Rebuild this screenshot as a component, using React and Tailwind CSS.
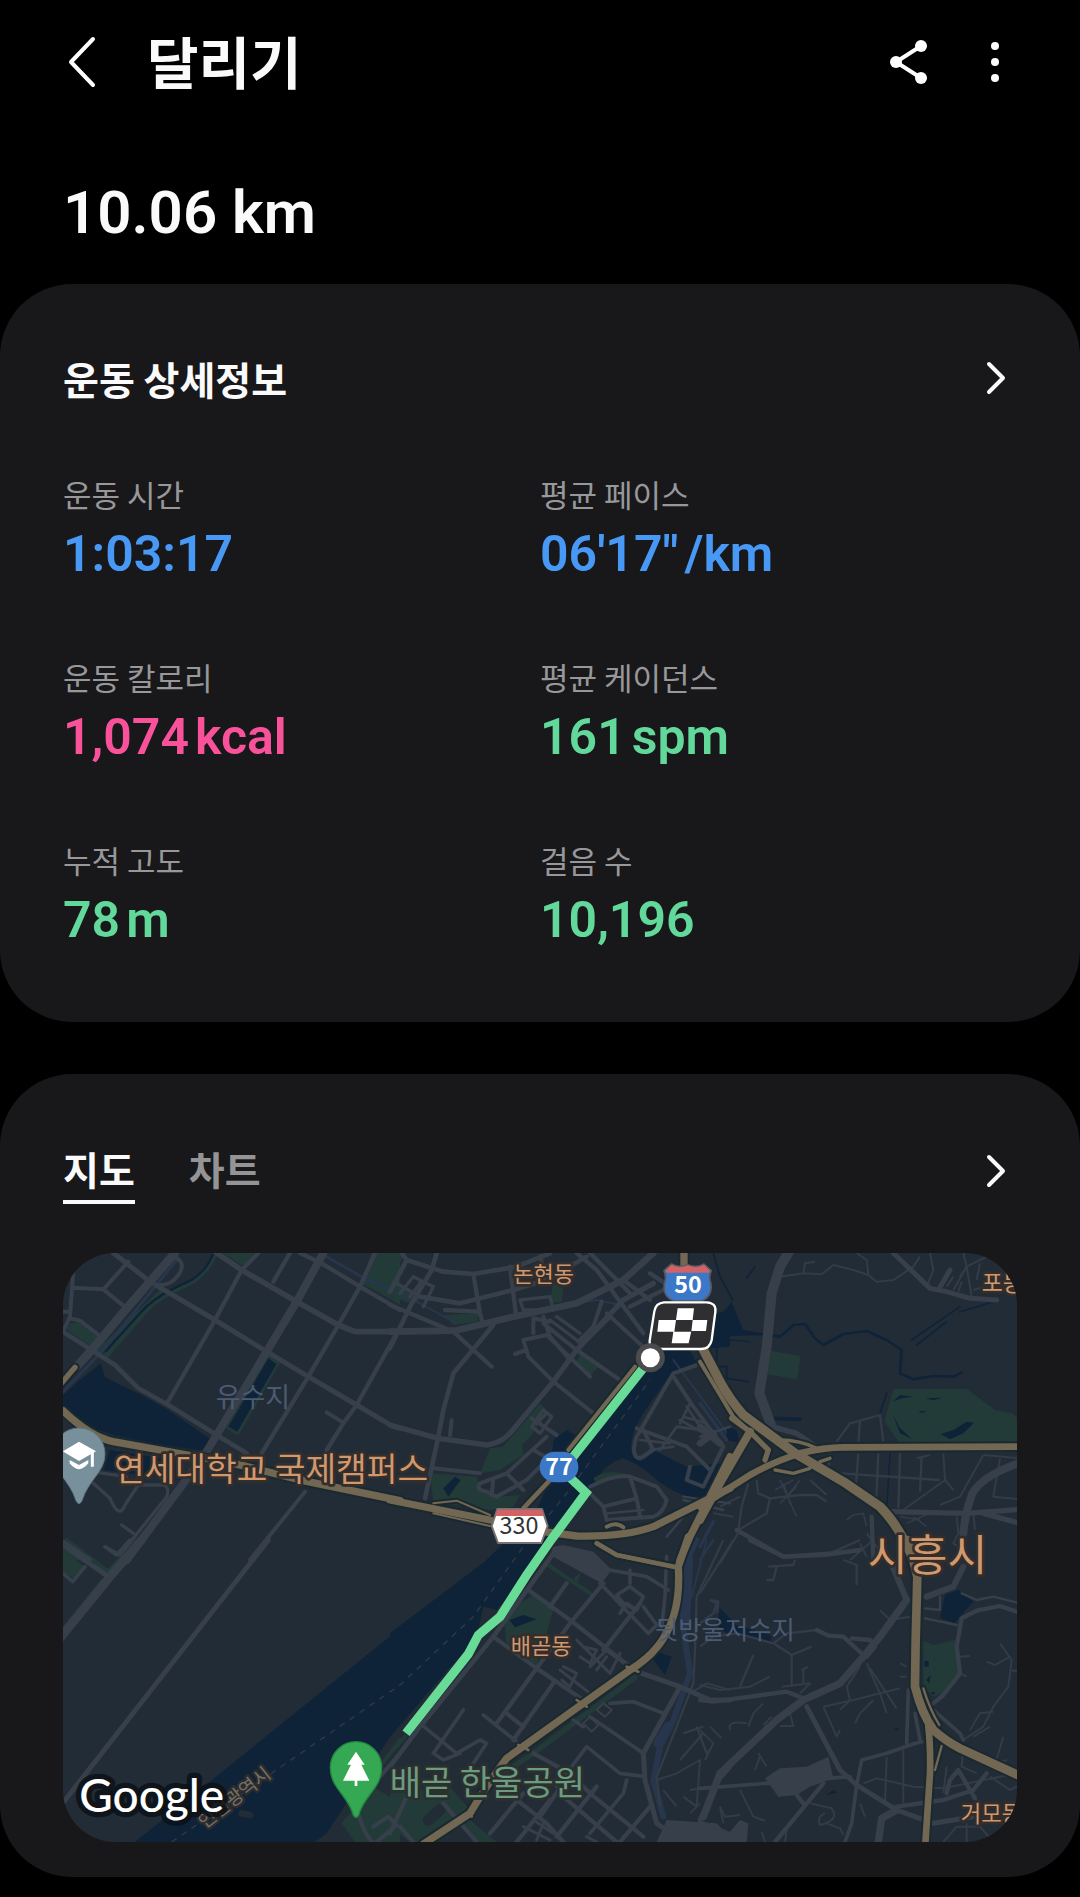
import { useState } from 'react'

const STATS = [
	{ label: '운동 시간', value: '1:03:17', color: 'text-[#4799f5]' },
	{ label: '평균 페이스', value: '06\'17"', unit: '/km', color: 'text-[#4799f5]' },
	{ label: '운동 칼로리', value: '1,074', unit: 'kcal', color: 'text-[#f9529b]' },
	{ label: '평균 케이던스', value: '161', unit: 'spm', color: 'text-[#62d99b]' },
	{ label: '누적 고도', value: '78', unit: 'm', color: 'text-[#62d99b]' },
	{ label: '걸음 수', value: '10,196', color: 'text-[#62d99b]' },
]

const LAND = '#212c37'
const WATER = '#0f2338'
const PARK = '#233b38'
const ROAD = '#373f4a'
const LANE = '#323b47'
const RAIL = '#27364d'
const HIGHWAY = '#716752'
const CASING = '#1a292f'

// the map is cut in six tiles, every tile draws in its own coordinates
const TILES = [
	{
		x: -9,
		y: -9,
		water: [
			'M9 475 V435 L60 390 L122 340 L135 380 L180 405 L235 430 L325 480 L452 568 L440 603 L300 585 L160 555 L100 535 L50 505Z',
			'M150 600 L370 635 L365 690 L130 660Z',
		],
		park: [
			'M20 240 L30 220 L60 215 L115 260 L95 290Z',
			'M490 9 H582 L565 42 L545 45Z',
			'M935 9 H1020 V165 L960 130 L905 100Z',
			'M9 870 L100 930 H9Z',
			'M622 316 L660 338 L535 557 L498 535Z',
		],
		ponds: ['M625 325 L650 342 L532 545 L505 530Z'],
		lines: [
			[PARK, 14, 'M110 310 L230 195 L310 120'],
			[PARK, 16, 'M465 9 Q445 60 400 92 L345 120 Q280 150 245 195 L140 315'],
			[WATER, 7, 'M460 9 Q442 58 398 88 L340 116 Q276 148 240 190 L138 303'],
			[RAIL, 9, 'M9 425 L130 300 L350 30'],
			[RAIL, 8, 'M780 9 L905 80 L960 105 L1020 140'],
		],
		roads: [
			[15, 'M160 9 L270 95 L465 210 L620 305 L745 380 L890 465 L1000 530 L1020 535'],
			[17, 'M465 5 L545 60 L710 155 L835 225 L885 245 L1020 245'],
			[26, 'M345 9 L200 175 L95 300 L50 350'],
			[24, 'M790 9 L710 155 L620 305 L470 555 L430 620 L200 930'],
			[13, 'M595 9 L545 60 L465 210 L320 462 M690 9 L640 95 M720 9 L785 40 L900 110 L1020 180'],
			[13, 'M945 9 L900 110 L835 225 L745 380 L605 610 M1010 250 L890 465 L850 520 L800 600'],
			[12, 'M205 35 L130 118 L35 113 M130 118 L200 175 M40 60 L30 200 L9 245 M9 185 H30 M30 205 L60 212 L120 258'],
			[12, 'M345 20 Q380 40 355 75 Q335 105 300 105'],
			[14, 'M9 245 L95 300 L165 345 L235 415 L325 465 L470 555 L560 610'],
			[12, 'M800 487 L850 518 M735 725 L570 930 M9 875 L90 930'],
			[10, 'M95 665 L200 680 M100 700 L150 745 Q178 810 195 765 L235 705 L310 705 Q330 710 320 740 L180 915 L135 890 M185 825 L220 850'],
		],
		highways: [
			[22, 'M9 482 Q90 560 160 575 L300 600 L520 640 L740 694 L1020 752'],
			[16, 'M0 405 L45 352'],
		],
	},
	{
		x: 981,
		y: -9,
		water: [
			'M800 270 L545 600 L565 560 L530 540 L490 570 L480 690 L440 780 L290 930 H440 L600 720 Q640 640 700 625 Q760 650 800 690 Q870 740 920 745 L950 750 L1000 640 L890 650 L790 600 Q750 660 725 610 Q715 560 760 490 L830 390 L920 340 L900 300 L1020 290 V180 L980 190 L960 300Z',
		],
		park: [
			'M0 9 H45 L20 60 L0 75Z',
			'M0 80 L40 110 L90 150 L60 160 L0 135Z',
			'M165 195 L265 190 L262 215 L190 225Z',
			'M490 100 L520 115 L515 155 L480 160Z',
			'M575 310 L625 350 L600 378 L555 340Z',
			'M450 460 L475 485 L420 560 L395 585 L400 615 L330 660 L270 670 L300 595 L340 590Z',
			'M120 670 L260 680 L270 710 L330 740 L390 735 L370 770 L300 780 L130 755Z',
			'M610 685 Q670 645 740 690 L700 680 L620 700Z',
		],
		ponds: ['M160 715 L195 680 L212 690 L175 740Z'],
		lines: [
			[RAIL, 6, 'M0 115 L90 160 L200 220 M560 160 L620 150 L690 165 M850 330 L1020 560'],
		],
		roads: [
			[20, 'M0 245 L195 242 L370 200 L560 160 L700 90 L790 9'],
			[14, 'M50 30 L0 125 M35 9 L50 30 L160 65 L250 72 L380 50 L480 10'],
			[14, 'M140 9 L125 60 L60 170 L0 295 M90 140 L210 160 L370 120 L470 90'],
			[13, 'M250 72 L270 190 L280 225 M360 50 L378 195 M450 20 L470 90 L590 20 M165 180 L265 185'],
			[13, 'M0 165 L60 190 L190 245 L250 300 L305 350'],
			[14, 'M310 225 L190 370 L160 480 L145 560 L105 745'],
			[16, 'M0 525 L145 565 L290 585 Q330 580 360 550 L490 395 L560 300 L700 150 L790 100'],
			[12, 'M400 270 L470 255 L600 380 M400 270 L415 320 L490 395 L610 490 M375 312 L410 300 M185 510 L180 555'],
			[12, 'M460 220 L560 300 L690 390 M430 250 V205 L480 215 M540 330 L480 260 L460 200 M565 275 L610 230 L635 155 M650 190 L770 300'],
			[13, 'M560 9 L620 60 L760 250 M600 9 L720 130 M780 70 L840 110 L720 170 M700 90 L780 150 M660 200 L560 300'],
			[12, 'M500 555 L425 505 M430 600 L500 640 M470 560 L350 670 L270 700 Q255 720 290 725 L320 740 L410 690 L460 640 M350 670 L400 720 M310 685 L305 735 M130 655 L270 670'],
			[10, 'M20 100 L90 140 M30 130 L70 80 L130 110 L100 170 M60 140 L90 100 M390 150 L480 140 L490 180 L400 180Z M480 210 L560 270 M500 200 L570 250'],
			[10, 'M460 480 L485 500 L450 550 L425 530Z M440 520 L470 490'],
			[12, 'M850 370 L920 345 M850 370 L740 560 Q720 620 750 625 L790 600 L760 540 M850 380 L910 470 L1000 590 L940 710 L890 690 L900 650 M740 535 L890 590 L960 660'],
			[8, 'M810 600 L860 530 L930 540 M870 510 L960 560 M1020 530 L930 560 M900 460 L870 520 M890 470 L930 530 M880 500 L950 520 M750 570 L840 580 M780 600 L850 590'],
			[12, 'M600 710 Q680 670 720 680 L800 710 L830 750 Q820 790 790 800 L650 810 L640 770 L600 730 M640 770 L740 745 L720 680 M740 745 L750 800'],
			[7, 'M880 750 L1000 780 M830 860 L880 800 M650 790 L760 780 M880 740 L1020 760'],
		],
		highways: [
			[22, 'M0 750 L300 810'],
			[22, 'M460 845 L560 858 Q700 862 790 830 L1020 715'],
			[14, 'M480 690 L400 775'],
			[12, 'M735 350 L535 600'],
			[22, 'M882 9 V50'],
			[22, 'M1020 620 L960 740 L900 860 L870 930'],
			[12, 'M620 880 L680 915 L850 950 M650 830 Q680 815 700 832'],
			[6, 'M130 760 L200 752 L300 795 M130 790 L300 828 M930 335 L1020 490'],
		],
	},
	{
		x: 1911,
		y: -9,
		water: [
			'M50 210 L95 155 L130 240 L200 255 L0 262 V200Z',
			'M80 570 V530 L110 540 L120 580Z',
		],
		park: [
			'M580 417 H800 L885 480 L935 490 L960 510 V580 H600 L553 515Z',
			'M215 303 L302 318 L291 388 L200 373Z',
		],
		ponds: [
			'M578 455 L600 435 L640 440 L605 445Z',
			'M675 445 L728 443 L700 451Z',
			'M655 483 L680 484 L665 489Z',
			'M722 552 L760 540 L800 515 L822 518 L790 550 L750 568Z',
			'M578 492 L600 535 L638 568 L600 550Z',
		],
		lines: [
			[WATER, 8, 'M130 245 L240 260 L280 225 L315 222 L345 265 L370 285 L430 252 L500 243 L560 270 L605 300 L600 370 L640 388 L700 378 L760 380 L785 368'],
			[WATER, 5, 'M635 270 L780 170 M650 285 L740 215 M780 185 L850 165 L890 150 M40 10 L60 80 L98 150 M560 430 L540 490 M140 85 L165 50 M50 290 V350 H80 V385 L145 395'],
			[WATER, 11, 'M215 505 L300 508'],
			[WATER, 4, 'M0 262 L150 275 M570 610 L560 780'],
			[RAIL, 10, 'M0 460 L80 570 M40 815 L0 890'],
		],
		roads: [
			[30, 'M270 0 L240 50 L215 130 L200 290 L178 430 L215 530'],
			[16, 'M215 530 L290 550 L355 595'],
			[15, 'M580 9 L690 115 L740 125 L810 145 L890 150 M715 120 L750 60'],
			[24, 'M960 638 Q840 680 815 735 Q795 790 790 850'],
			[16, 'M570 785 L800 790 L960 778 M850 790 L960 820'],
			[13, 'M110 840 L250 920 L370 915 L480 900 M515 800 L520 930'],
			[20, 'M0 580 L40 550 M0 530 L60 580'],
		],
		lanes: [
			[6, 'M240 80 L310 70 L365 73 L400 45 L460 60 L505 75 L530 95 L580 90 L640 50 L660 20 M310 70 L315 40 L345 35 M505 75 L500 30 L470 9'],
			[6, 'M690 9 L700 60 L680 110 M760 120 L800 50 L860 20 M800 50 L815 140 M830 90 L840 40 M790 9 L800 50 L780 80 M820 120 L890 100 M740 110 L760 80 M775 125 L785 95'],
			[7, 'M410 575 L450 520 L540 495 L550 575 M480 515 L475 580 M475 610 L468 700 M535 610 L528 760 M600 610 L595 775 M665 620 L660 725 M390 668 L720 690'],
			[6, 'M730 610 L735 690 L610 780 M650 625 L690 615 M850 615 L780 740 L720 765 M735 690 L760 720 M900 625 L880 740 L960 748 M850 615 L960 625'],
			[7, 'M170 690 L175 730 L210 745 L300 735 L350 735 L380 755 M330 690 L380 735 M210 745 L200 790 L115 840 L125 770 L145 700'],
			[5, 'M240 690 L290 800 M260 740 L300 690 M225 720 L280 690 M240 760 L290 710 M250 700 L270 760 M440 810 L460 795 L490 790 L500 830 M640 800 L680 830 M600 800 L660 810 M620 820 L690 790'],
			[6, 'M820 790 L825 840 M770 800 L775 850 L760 880 L790 900 M60 770 L120 740 M40 790 L100 800 M450 930 L520 870 M480 880 L500 920'],
			[7, 'M120 840 L60 940 M500 850 L560 930 M390 610 L385 660'],
		],
		highways: [
			[12, 'M0 335 L100 500 L150 545'],
			[28, 'M0 280 L60 395 Q90 450 130 495 L285 610 L430 695 L540 770 Q600 830 645 940'],
			[20, 'M0 770 L150 675 Q220 635 300 610 Q370 592 430 592 L960 590'],
			[24, 'M150 545 L60 700 L0 810'],
			[16, 'M95 505 L150 545 L205 600 L195 630'],
			[10, 'M240 570 Q300 570 350 595 M225 660 L280 670 L330 655 M360 635 L390 625'],
		],
	},
	{
		x: -9,
		y: 861,
		water: ['M1020 265 L225 906 H765 L800 880 L1020 545Z'],
		park: [
			'M9 35 L75 80 L45 115 L9 100Z',
			'M845 850 L940 740 L1020 790 V906 H885Z',
		],
		ponds: [],
		lines: [
			[PARK, 12, 'M20 0 L145 95 L230 0 M125 125 L15 260'],
			[PARK, 12, 'M1020 600 L960 680'],
			[LAND, 20, 'M545 820 L570 825'],
		],
		roads: [
			[26, 'M245 0 L150 110 L0 295'],
			[15, 'M9 15 L145 110'],
			[11, 'M9 100 L38 125 L75 80 M135 20 L170 45 L210 0'],
			[15, 'M625 0 L0 800'],
			[12, 'M895 820 Q910 880 940 910 M940 860 L985 830 L1010 855 L950 906 M1020 640 L960 710'],
		],
		highways: [],
	},
	{
		x: 981,
		y: 861,
		water: ['M0 280 L310 45 L370 0 H490 L320 210 L280 200 L260 290 L0 590Z', 'M800 335 L845 350 L825 405 L790 360Z'],
		park: [
			'M430 165 L490 210 L470 280 L440 375 L350 310 L340 220Z',
			'M0 760 L180 740 L240 810 L100 906 H60 L0 860Z',
			'M240 840 L320 906 H260 L210 860Z',
			'M550 115 L575 95 L560 130Z',
		],
		ponds: ['M358 240 L400 225 L440 238 L375 262Z'],
		lines: [
			[PARK, 12, 'M470 72 L600 160 M0 640 L45 590'],
			[PARK, 16, 'M735 412 L430 640 L340 700'],
			[LAND, 34, 'M115 840 L150 810'],
			[RAIL, 18, 'M920 0 Q860 100 885 300 L900 400 L850 540 L810 620 L790 720 L820 830'],
			[RAIL, 30, 'M895 60 L885 250 M835 560 L805 610'],
			[RAIL, 6, 'M950 0 L905 170'],
		],
		built: [
			'M490 20 L520 15 L610 35 L665 90 L635 130 L480 45Z',
			'M830 840 L980 850 L1020 890 V906 H800Z',
		],
		roads: [
			[14, 'M490 40 L310 290 L90 560 L0 680'],
			[13, 'M415 150 L540 240 L720 380 M310 290 L440 385 L580 480'],
			[13, 'M640 130 L540 250 L440 385 L320 550 M530 130 L480 200 M750 190 L640 330'],
			[11, 'M90 550 L200 640 M220 510 L130 640 L160 660 L210 640 M280 525 L380 605 M200 640 L270 600 L290 610 L250 670'],
			[13, 'M490 430 L370 600 M350 520 L400 560 M720 380 L650 330'],
			[11, 'M660 90 L770 110 L835 150 M775 280 L630 130 M775 280 L800 255 L760 200 M720 90 V130 M680 165 L720 140 L760 170 L740 210 L700 190Z M690 220 L710 190 L740 210'],
			[11, 'M830 50 L825 170 L815 260'],
			[9, 'M560 300 L660 400 L690 340 M580 320 L620 330 L600 370 L570 350 M510 390 L600 460 M520 380 L560 400 L540 440 L515 420 M600 380 L650 330 M620 390 L650 350'],
			[15, 'M740 395 L870 440 L960 480 L1020 480'],
			[15, 'M865 450 L760 640 L765 720 L800 850 L830 870'],
			[11, 'M660 490 L730 485 L820 520 M550 540 L580 560 M600 530 L760 640 M590 620 L500 740 M590 620 L690 700 L765 710 M710 720 L700 760 L600 880'],
			[6, 'M600 530 L625 555 L605 575 L580 550Z M640 490 L665 510 L645 530 L620 510Z'],
			[13, 'M430 640 L540 700 L600 760 L760 890 M330 740 L470 850 L520 906 M400 760 L300 880 M480 780 L380 906 M540 700 L450 830 M620 740 L500 890 M520 770 L680 906 M780 800 L690 906'],
			[9, 'M400 860 L480 900 M430 840 L490 880 M440 900 L460 850 M590 890 L620 906'],
			[12, 'M0 880 L50 770 M30 860 L70 906 M160 790 L260 906'],
			[14, 'M1020 680 L985 720 L930 840'],
		],
		lanes: [
			[7, 'M1000 0 L920 170 L915 330 L910 430 L860 560 L800 710 L810 800 M960 180 L980 190 L970 220 L930 250 M880 580 L940 560 M940 580 L870 660 M920 560 L950 640 L960 630'],
			[6, 'M800 720 L860 700 L930 660 L920 800 L880 770 M900 750 L960 740 M900 820 L930 790 M820 750 L860 800 M900 460 L950 430 L1020 450 M990 800 L1000 850'],
		],
		highways: [
			[14, 'M620 10 L680 45 L860 82'],
			[22, 'M895 -10 L865 80 Q870 170 850 230 Q820 330 720 390 L580 490 L350 655 Q300 720 240 820 L100 912'],
			[8, 'M560 480 L590 500 M385 615 L415 630 M235 820 L245 830 M710 380 L745 395'],
		],
	},
	{
		x: 1911,
		y: 861,
		water: [
			'M735 165 L775 150 L820 185 L775 235 L765 250 L720 235Z',
			'M50 255 L60 205 L110 255 L215 288 L210 305 L80 280Z',
		],
		park: ['M670 303 L700 315 L765 300 L775 400 L735 455 L700 470 L670 440Z'],
		ponds: ['M673 363 H686 V380 H673Z', 'M678 420 L692 405 L688 430Z', 'M378 765 L400 750 L412 758Z', 'M582 565 H600 L590 572Z', 'M695 455 L708 458 L695 465Z'],
		lines: [[RAIL, 8, 'M40 0 L0 60']],
		built: ['M195 715 L240 685 L320 680 L385 650 L400 715 L330 740 L290 765 L235 770Z', 'M0 840 L90 875 L120 840 L145 850 L140 906 H0Z'],
		roads: [
			[13, 'M0 480 L40 485 L260 455 L310 475'],
			[22, 'M620 180 L540 290 L490 350 L420 430 L310 480 L230 540 L60 700 L10 830'],
			[15, 'M320 500 L420 690 L470 735 L590 810 L700 850 L820 830'],
			[13, 'M150 0 L250 50 L400 40 M350 270 L385 287 L430 290 L490 345 M500 350 L525 320 L510 300 L455 295'],
			[18, 'M570 60 L620 180 M680 170 L760 140 L790 80'],
			[11, 'M0 745 L200 730 L450 710 M470 735 L485 660 L560 640 L640 612 L665 605 M470 735 L455 850 L435 906'],
			[13, 'M225 906 L370 730 M290 765 L310 790 M590 800 L730 780 L820 750 L860 700 M740 760 L750 720 L775 690 L825 775'],
			[22, 'M590 810 L545 835 L535 906'],
			[13, 'M960 218 L900 198 L830 212 L785 235 L770 320 L780 400 L730 465 L700 490'],
			[11, 'M625 450 L620 610 M700 510 L780 580 L790 600 M645 520 L660 600'],
			[7, 'M785 160 L830 180 L880 170 L960 190 M720 170 V210 L675 205 M675 235 L770 255'],
		],
		lanes: [
			[7, 'M100 0 L0 160 M390 40 L480 0 M430 60 L470 75 V135 M205 80 L280 75 L285 60 M230 80 L220 120 H200 M30 180 L55 185 L50 220 M0 320 L40 290 L110 280 L220 310 L275 345 L335 320 M220 310 L260 280 L350 270 M275 345 V440 M120 440 L160 345'],
			[6, 'M0 435 L60 450 L150 440 L210 410 M245 440 L330 430 L300 460 M310 390 V430 M305 390 L325 380 M190 490 L160 520 L145 560 M90 570 Q80 540 140 550 M190 555 L215 530 M270 520 L280 558 H240 M370 500 L410 590 L420 570 M370 500 L460 480 L540 460 L600 445'],
			[6, 'M420 510 L450 480 L440 440 L480 380 M465 550 L480 520 L520 480 M500 370 L540 460 L560 520 M510 385 L590 505 M540 210 L570 240 L630 230 M600 370 L620 380 M600 410 H620'],
			[6, 'M900 310 L935 360 L925 440 L880 500 L850 560 L790 600 M860 365 L885 375 L930 350 M935 392 H960 M810 570 L840 520 L880 515 M820 590 L870 560 M780 350 L810 348 M780 400 L800 410'],
			[6, 'M60 800 L75 830 L120 825 M120 750 L160 830 L195 842 M180 650 L165 690 M175 640 L200 680 M30 560 L65 595 M15 660 L40 610 L0 570 M185 875 L195 906 M260 870 L255 906 M330 790 L395 805 Q420 840 360 855 Q350 830 375 820 M380 850 L420 865 L430 885'],
			[6, 'M490 730 L530 715 L640 740 L730 745 L951 700 M560 650 L555 790 M610 630 L610 790 M880 690 L910 590 M860 680 L920 660 M870 710 L930 750 L960 735 M740 680 L730 760 M790 620 L785 680 L830 700 M730 906 L770 860 L840 860 L880 906 M800 850 L800 906 M480 790 L495 830'],
		],
		highways: [
			[26, 'M625 0 L652 110 L647 300 L645 440 Q665 520 700 570 Q740 605 780 625 L960 708'],
			[20, 'M685 560 Q692 620 690 700 L676 912'],
			[7, 'M670 445 Q690 510 718 555 M725 618 L705 690'],
		],
	},
]

// place names on the map, [x, y, font size, fill, text, halo]
const PLACES = [
	[458, 461, 81, '#4c5b72', '유수지', null],
	[2756, 113, 69, '#d0986d', '포동', '#332d2b'],
	[1351, 88, 66, '#d0986d', '논현동', '#332d2b'],
	[153, 684, 100, '#d0986d', '연세대학교 국제캠퍼스', '#332d2b'],
	[2414, 953, 130, '#d0986d', '시흥시', '#332d2b'],
	[1776, 1158, 76, '#4c5b72', '뒷방울저수지', null],
	[1343, 1204, 66, '#d0986d', '배곧동', '#332d2b'],
	[980, 1627, 102, '#6c9b80', '배곧 한울공원', '#2b302e'],
	[2693, 1707, 67, '#d0986d', '거모동', '#332d2b'],
]

const tileAt = ({ x, y }) => `translate(${x} ${y})`

const RouteMap = () => (
	<svg
		viewBox="0 0 2862 1767"
		className="block w-full h-auto rounded-[52px] bg-[#212c37] font-['Noto_Sans_CJK_KR',sans-serif]"
		role="img"
		aria-label="달리기 경로"
		fill="none"
		strokeLinejoin="round"
	>
		{/* water, parks and the small streams */}
		{TILES.map((tile, i) => (
			<g key={i} transform={tileAt(tile)}>
				{tile.water.map((d) => <path key={d} d={d} fill={WATER} />)}
				{tile.park.map((d) => <path key={d} d={d} fill={PARK} />)}
				{tile.ponds?.map((d) => <path key={d} d={d} fill={WATER} />)}
				{tile.lines.map(([color, width, d]) => (
					<path key={d} d={d} stroke={color} strokeWidth={width} strokeLinecap="round" />
				))}
				{tile.lanes?.map(([width, d]) => <path key={d} d={d} stroke={LANE} strokeWidth={width} />)}
				{tile.built?.map((d) => <path key={d} d={d} fill={ROAD} />)}
			</g>
		))}

		{TILES.map((tile, i) => (
			<g key={i} transform={tileAt(tile)} stroke={ROAD} strokeLinecap="round">
				{tile.roads.map(([width, d]) => <path key={d} d={d} strokeWidth={width} />)}
			</g>
		))}

		{/* city border on the river */}
		<path
			d="M326 1767 L1011 1296 L1231 1091 L1381 881 L1511 721 L1761 381"
			stroke="#2f3a46"
			strokeWidth="4"
			strokeDasharray="18 18"
		/>

		{TILES.map((tile, i) => (
			<g key={i} transform={tileAt(tile)} stroke={CASING} strokeLinecap="round">
				{tile.highways.map(([width, d]) => <path key={d} d={d} strokeWidth={width + 12} />)}
			</g>
		))}
		{TILES.map((tile, i) => (
			<g key={i} transform={tileAt(tile)} stroke={HIGHWAY} strokeLinecap="round">
				{tile.highways.map(([width, d]) => <path key={d} d={d} strokeWidth={width} />)}
			</g>
		))}

		{PLACES.map(([x, y, size, fill, name, halo]) => (
			<text
				key={name}
				x={x}
				y={y}
				fontSize={size}
				fill={fill}
				stroke={halo || 'none'}
				strokeWidth="16"
				paintOrder="stroke"
			>
				{name}
			</text>
		))}

		<g transform="translate(981 -9)">
			<path
				d="M775 335 L530 645 Q518 662 535 678 L588 728 L483 870 L410 975 L330 1100 L265 1155 L235 1212 L48 1450"
				stroke="#68dc96"
				strokeWidth="27"
				strokeLinejoin="miter"
			/>

			{/* road shields */}
			<rect x="449" y="605" width="116" height="92" rx="46" fill="#3b78c8" />
			<text x="507" y="675" fontSize="70" fontWeight="700" fill="#fff" textAnchor="middle">77</text>

			<path d="M322 777 H456 L473 828 L454 879 H324 L305 828Z" fill="#fff" stroke="#77706f" strokeWidth="6" />
			<path d="M323 779 H455 L461 798 H317Z" fill="#d16266" />
			<text x="387" y="851" fontSize="70" fill="#333" textAnchor="middle">330</text>

			<path
				d="M845 42 Q868 55 893 44 Q920 55 942 42 L964 62 Q955 80 962 98 Q970 138 935 153 H850 Q815 138 824 98 Q830 80 822 62Z"
				fill="#3b78c8"
				stroke="#59595f"
				strokeWidth="5"
			/>
			<path d="M845 44 Q868 57 893 46 Q920 57 942 44 L960 62 L956 68 H830 L826 62Z" fill="#d16266" />
			<text x="894" y="129" fontSize="70" fontWeight="700" fill="#fff" textAnchor="middle">50</text>

			{/* finish flag and the end point */}
			<path
				d="M822 157 H950 Q980 159 976 186 L965 270 Q960 296 934 297 H800 Q776 296 779 272 L793 184 Q797 159 822 157Z"
				fill="#2f2f31"
				stroke="#fff"
				strokeWidth="7"
			/>
			<path
				d="M863 175 H912 L908 210 H952 L948 243 H904 L896 280 H845 L850 245 H802 L806 210 H858Z M858 210 L853 245 H904 L908 210Z"
				fill="#fff"
				fillRule="evenodd"
			/>
			<circle cx="781" cy="323" r="36" fill="#fff" stroke="#4b4b4d" strokeWidth="15" />
		</g>

		{/* university pin */}
		<g transform="translate(-9 -9)">
			<path
				d="M57 534 A78 78 0 0 1 135 612 C135 665 85 690 66 752 Q57 770 48 752 C29 690 -21 665 -21 612 A78 78 0 0 1 57 534Z"
				fill="#78909c"
				stroke="#607883"
				strokeWidth="3"
			/>
			<path d="M57 575 L108 604 L57 633 L8 604Z M29 630 L57 645 L85 630 V640 Q57 675 29 640Z" fill="#fff" />
			<path d="M97 606 V650" stroke="#fff" strokeWidth="9" />
		</g>

		{/* park pin and the attribution */}
		<g transform="translate(-9 861)">
			<path
				d="M888 605 A77 77 0 0 1 965 682 C965 745 912 765 896 825 Q888 840 880 825 C864 765 811 745 811 682 A77 77 0 0 1 888 605Z"
				fill="#34a853"
				stroke="#248a40"
				strokeWidth="4"
			/>
			<path d="M888 635 L914 674 H904 L928 722 H892 V738 H884 V722 H849 L873 674 H862Z" fill="#fff" />
			<text
				x="434"
				y="868"
				fontSize="56"
				fill="#757068"
				stroke="#2c2c2d"
				strokeWidth="14"
				paintOrder="stroke"
				transform="rotate(-38 434 868)"
			>
				인천광역시
			</text>
			<text
				x="58"
				y="815"
				fontSize="138"
				fill="#fff"
				stroke="#0c1116"
				strokeOpacity="0.85"
				strokeWidth="32"
				paintOrder="stroke"
				className="font-['Lato',sans-serif]"
				fontWeight="500"
			>
				Google
			</text>
		</g>
	</svg>
)

const ChevronRight = () => (
	<svg viewBox="0 0 24 40" className="block w-6 h-10" fill="none" aria-hidden="true">
		<path d="M4 6 L18 20 L4 34" stroke="#fafafa" strokeWidth="4" strokeLinecap="round" strokeLinejoin="round" />
	</svg>
)

const Stat = ({ label, value, unit, color }) => (
	<div>
		<dt className="text-[31px] leading-[44px] text-[#98989b]">{label}</dt>
		<dd className={`mt-2 flex gap-[6px] text-[50px] leading-[60px] font-semibold font-['Roboto',sans-serif] ${color}`}>
			<span>{value}</span>
			{unit && <span>{unit}</span>}
		</dd>
	</div>
)

const Tab = ({ active, children, ...props }) => (
	<button
		type="button"
		role="tab"
		aria-selected={active}
		className={`pb-[2px] border-b-4 text-[39px] leading-[60px] font-bold ${active ? 'border-[#fafafa] text-[#fafafa]' : 'border-transparent text-[#949496]'}`}
		{...props}
	>
		{children}
	</button>
)

const App = () => {
	const [tab, setTab] = useState('map')

	return (
		<div className="min-h-screen bg-black pb-5 text-[#fafafa] font-['Noto_Sans_CJK_KR',sans-serif]">
			<header className="flex items-center h-[124px] px-[63px]">
				<button type="button" aria-label="뒤로">
					<svg viewBox="0 0 38 54" className="block w-[38px] h-[54px]" fill="none" aria-hidden="true">
						<path d="M30 4 L8 27 L30 50" stroke="#fff" strokeWidth="4" strokeLinecap="round" strokeLinejoin="round" />
					</svg>
				</button>
				<h1 className="ml-[46px] pb-1 text-[56px] leading-[80px] font-bold">달리기</h1>

				<div className="flex items-center gap-[42px] ml-auto">
					<button type="button" aria-label="공유">
						<svg viewBox="0 0 44 48" className="block w-11 h-12" fill="#fff" aria-hidden="true">
							<path d="M34 8 L9 24 L34 40" fill="none" stroke="#fff" strokeWidth="4" />
							<circle cx="34" cy="8" r="6" />
							<circle cx="9" cy="24" r="6" />
							<circle cx="34" cy="40" r="6" />
						</svg>
					</button>
					<button type="button" aria-label="더보기">
						<svg viewBox="0 0 44 48" className="block w-11 h-12" fill="#fff" aria-hidden="true">
							<circle cx="22" cy="8" r="4" />
							<circle cx="22" cy="24" r="4" />
							<circle cx="22" cy="40" r="4" />
						</svg>
					</button>
				</div>
			</header>

			<p className="px-[63px] pt-[53px] pb-[35px] text-[60px] leading-[72px] font-semibold font-['Roboto',sans-serif]">
				10.06 km
			</p>

			<main className="flex flex-col gap-[52px]">
				<section className="px-[63px] pt-16 pb-[72px] rounded-[72px] bg-[#18181a]">
					<div className="flex items-center justify-between pr-2">
						<h2 className="text-[39px] leading-[60px] font-bold">운동 상세정보</h2>
						<button type="button" aria-label="운동 상세정보 보기">
							<ChevronRight />
						</button>
					</div>

					<dl className="grid grid-cols-2 gap-y-[71px] mt-16">
						{STATS.map((stat) => <Stat key={stat.label} {...stat} />)}
					</dl>
				</section>

				<section className="px-[63px] pt-16 pb-[35px] rounded-[72px] bg-[#18181a]">
					<div className="flex items-center justify-between pr-2">
						<div className="flex gap-[54px]" role="tablist">
							<Tab active={tab === 'map'} onClick={() => setTab('map')}>지도</Tab>
							<Tab active={tab === 'chart'} onClick={() => setTab('chart')}>차트</Tab>
						</div>
						<button type="button" aria-label="지도 보기">
							<ChevronRight />
						</button>
					</div>

					<div className="mt-[49px]">
						<RouteMap />
					</div>
				</section>
			</main>
		</div>
	)
}

export default App
